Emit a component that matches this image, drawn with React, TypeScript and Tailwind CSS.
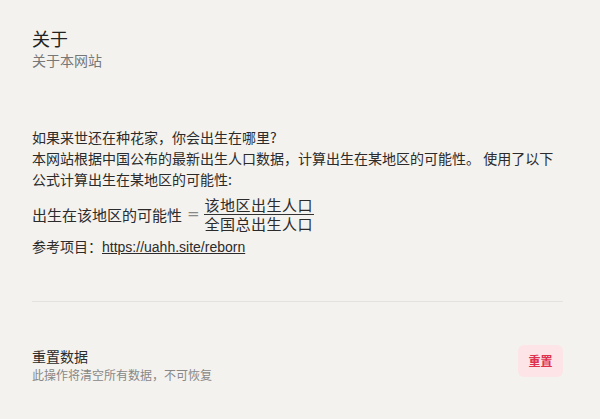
export default function App() {
  const cjk = { fontFamily: '"Microsoft YaHei", "Noto Sans CJK SC", "Noto Sans", sans-serif' }

  return (
    <div className="min-h-screen bg-[#f4f2ee] text-[#2b2b2b] pl-8 pr-[37px]" style={cjk}>
      {/* Header */}
      <header className="pt-[26px]">
        <h1 className="text-[18px] leading-[24px] font-normal text-[#222]">关于</h1>
        <p className="text-[14px] leading-[20px] text-[#777]">关于本网站</p>
      </header>

      {/* About */}
      <section className="mt-[57px] text-[14px] leading-[21px] text-[#2b2b2b]">
        <p>如果来世还在种花家，你会出生在哪里?</p>
        <p>本网站根据中国公布的最新出生人口数据，计算出生在某地区的可能性。 使用了以下公式计算出生在某地区的可能性:</p>
        <div className="mt-[6px] flex items-center text-[15px]">
          <span className="leading-[18px]">出生在该地区的可能性</span>
          <span className="ml-[5px] mr-[4px] text-[#888] font-['DejaVu_Serif',serif] text-[15px]">=</span>
          <span className="inline-flex flex-col items-center">
            <span className="leading-[18px] px-[1px] tracking-[0.5px]">该地区出生人口</span>
            <span className="h-px w-full bg-[#333]"></span>
            <span className="leading-[18px] px-[1px] tracking-[0.5px]">全国总出生人口</span>
          </span>
        </div>
        <p className="mt-[3px]">
          参考项目：
          <a
            href="https://uahh.site/reborn"
            className="underline text-[#2b2b2b] font-['Liberation_Sans',Arial,sans-serif]"
          >
            https://uahh.site/reborn
          </a>
        </p>
      </section>

      <div className="mt-[43px] h-px bg-[#e4e2de]"></div>

      {/* Reset */}
      <section className="mt-[43px] flex items-start justify-between">
        <div className="pt-px">
          <h3 className="text-[14px] leading-[20px] text-[#2b2b2b]">重置数据</h3>
          <p className="text-[12px] leading-[18px] text-[#888]">此操作将清空所有数据，不可恢复</p>
        </div>
        <button className="h-[32px] w-[45px] rounded-md bg-[#fde4e7] text-[12px] font-bold text-[#e0324e]">
          重置
        </button>
      </section>
    </div>
  )
}
